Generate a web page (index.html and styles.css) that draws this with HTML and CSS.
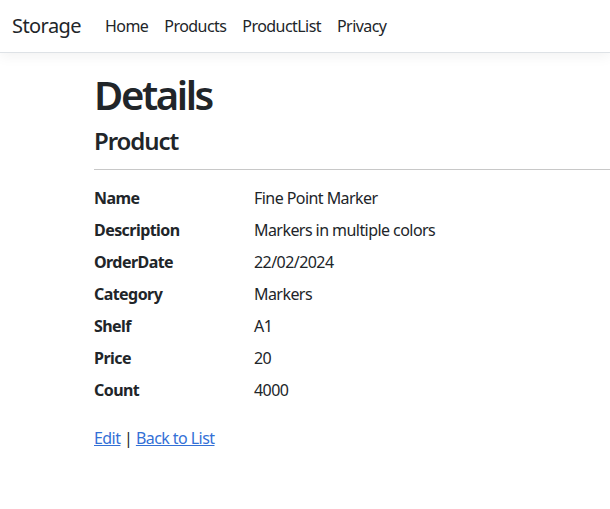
FILE: index.html
```
<!doctype html>
<html lang="en">
<head>
<meta charset="utf-8">
<meta name="viewport" content="width=device-width, initial-scale=1.0">
<title>Details - Storage</title>
<link rel="stylesheet" href="styles.css">
</head>
<body>
<header>
	<nav class="navbar">
		<a class="navbar-brand" href="#">Storage</a>
		<ul class="navbar-nav">
			<li><a class="nav-link" href="#">Home</a></li>
			<li><a class="nav-link" href="#">Products</a></li>
			<li><a class="nav-link" href="#">ProductList</a></li>
			<li><a class="nav-link" href="#">Privacy</a></li>
		</ul>
	</nav>
</header>
<div class="container">
	<main>
		<h1>Details</h1>
		<div>
			<h4>Product</h4>
			<hr>
			<dl class="row">
				<dt>Name</dt>
				<dd>Fine Point Marker</dd>
				<dt>Description</dt>
				<dd>Markers in multiple colors</dd>
				<dt>OrderDate</dt>
				<dd>22/02/2024</dd>
				<dt>Category</dt>
				<dd>Markers</dd>
				<dt>Shelf</dt>
				<dd>A1</dd>
				<dt>Price</dt>
				<dd>20</dd>
				<dt>Count</dt>
				<dd>4000</dd>
			</dl>
		</div>
		<div class="actions">
			<a href="#">Edit</a> |
			<a href="#">Back to List</a>
		</div>
	</main>
</div>
</body>
</html>
```
FILE: styles.css
```
html,body,ul,h1,h4,dl,dd{margin:0;padding:0}
ul{list-style:none}
body{font:16px/1.5 "Noto Sans","Liberation Sans",sans-serif;letter-spacing:-0.035em;color:#212529;background:#fff}
a{color:#3370d6}

.navbar{display:flex;align-items:center;height:52px;padding:0 12px;background:#fff;border-bottom:1px solid #dee2e6;box-shadow:0 4px 12px rgba(0,0,0,.05)}
.navbar-brand{font-size:20px;color:#212529;text-decoration:none;margin-right:16px}
.navbar-nav{display:flex}
.nav-link{display:block;padding:8px 8px;color:#212529;text-decoration:none}

.container{padding:0 0 0 94px}
main{padding-bottom:48px}
h1{font-size:40px;line-height:1.2;font-weight:600;letter-spacing:-0.06em;margin:18px 0 8px}
h4{font-size:24px;line-height:1.2;font-weight:600;letter-spacing:-0.045em;margin-bottom:8px}
hr{margin:13px 0 16px;border:0;border-top:1px solid #c8c8c8}
.row{display:grid;grid-template-columns:160px 1fr}
.row dt{font-weight:700;margin-bottom:8px}
.row dd{margin-bottom:8px}
.actions{margin-top:16px}
```
